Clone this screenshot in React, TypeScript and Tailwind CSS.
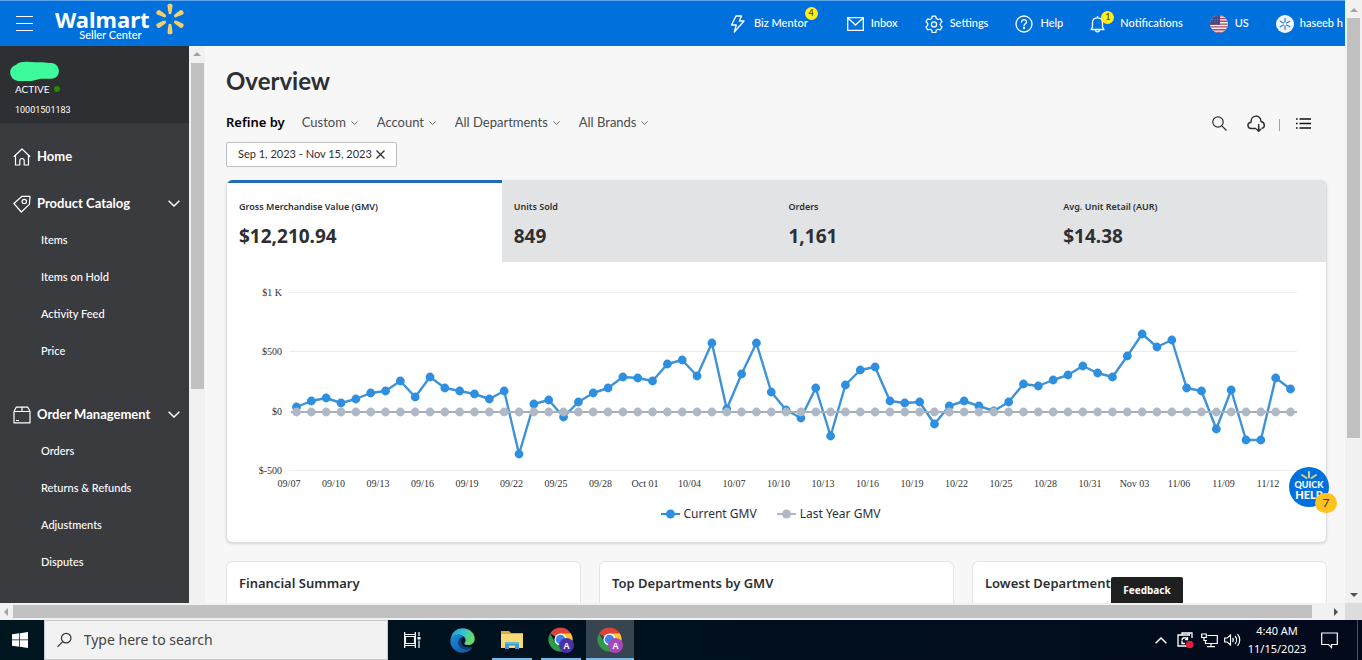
import React from "react";

type IconProps = { className?: string };

const SPARK_RAYS = [0, 60, 120, 180, 240, 300];

function Spark({ className }: IconProps) {
  return (
    <svg viewBox="-15 -15 30 30" className={className} fill="currentColor" aria-hidden="true">
      {SPARK_RAYS.map((angle) => (
        <path key={angle} transform={`rotate(${angle})`} d="M-1.3-5.2C-1.8-8-2.3-11-2.3-12.8C-2.3-14.8 2.3-14.8 2.3-12.8C2.3-11 1.8-8 1.3-5.2C1-4.3-1-4.3-1.3-5.2Z" />
      ))}
    </svg>
  );
}

function ThinSpark({ className }: IconProps) {
  return (
    <svg viewBox="-15 -15 30 30" className={className} stroke="currentColor" strokeWidth="2.600" strokeLinecap="round" aria-hidden="true">
      {SPARK_RAYS.map((angle) => (
        <path key={angle} transform={`rotate(${angle})`} d="M0-4V-12" />
      ))}
    </svg>
  );
}

function Bolt() {
  return (
    <svg viewBox="0 0 16 18" className="h-[18px] w-4" fill="none" stroke="currentColor" strokeWidth="1.3" strokeLinejoin="round" aria-hidden="true">
      <path d="M6 1h5.5L9.3 6H14L4.3 17l2-7H1.5z" />
    </svg>
  );
}

function Envelope() {
  return (
    <svg viewBox="0 0 17 14" className="h-3.5 w-[17px]" fill="none" stroke="currentColor" strokeWidth="1.3" aria-hidden="true">
      <path d="M.7.7h15.6v12.6H.7zM.9 1l7.6 7L16.100 1" />
    </svg>
  );
}

function Gear() {
  return (
    <svg viewBox="0 0 24 24" className="h-[18px] w-[18px]" fill="none" stroke="currentColor" strokeWidth="1.7" strokeLinejoin="round" aria-hidden="true">
      <path d="M9.700 1.500h4.600l.7 3.100 2.400 1.400 3-.95 2.300 4-2.300 2.150v2.600l2.300 2.150-2.300 4-3-.95-2.400 1.400-.7 3.100H9.700L9 20.400 6.600 19l-3 .95-2.300-4 2.300-2.150v-2.600L1.300 9.050l2.300-4 3 .95L9 4.600z" />
      <circle cx="12" cy="12.500" r="3.400" />
    </svg>
  );
}

function HelpIcon() {
  return (
    <svg viewBox="0 0 18 18" className="h-[18px] w-[18px]" fill="none" stroke="currentColor" strokeWidth="1.3" aria-hidden="true">
      <circle cx="9" cy="9" r="8" />
      <path d="M6.600 7.100C6.600 3.800 11.500 4 11.500 6.900C11.500 8.700 9 8.700 9 10.800" strokeLinecap="round" />
      <circle cx="9" cy="13" r=".5" fill="currentColor" />
    </svg>
  );
}

function Bell() {
  return (
    <svg viewBox="0 0 16 18" className="h-[18px] w-4" fill="none" stroke="currentColor" strokeWidth="1.300" strokeLinejoin="round" aria-hidden="true">
      <path d="M1 14.500h13L12.500 12V7.500C12.500 4.500 10.500 2.800 7.500 2.800S2.500 4.500 2.500 7.500V12zM7.500 2.800V1M5.500 14.800C5.500 17.600 9.500 17.600 9.500 14.800" />
    </svg>
  );
}

function Flag() {
  return (
    <svg viewBox="0 0 18 18" className="h-[18px] w-[18px]" aria-hidden="true">
      <clipPath id="flag-disc"><circle cx="9" cy="9" r="9" /></clipPath>
      <g clipPath="url(#flag-disc)">
        <path fill="#f3f1f4" d="M0 0h18v18H0z" />
        {[0, 2.800, 5.600, 8.400, 11.200, 14, 16.800].map((y) => (
          <path key={y} fill="#b5475c" d={`M0 ${y}h18v1.400H0z`} />
        ))}
        <path fill="#3f4a86" d="M0 0h10v9.800H0z" />
        {[1.800, 4.200, 6.600].map((y) => (
          <g key={y} fill="#a9aed0">
            <circle cx="2.500" cy={y} r=".45" />
            <circle cx="5" cy={y} r=".45" />
            <circle cx="7.500" cy={y} r=".45" />
          </g>
        ))}
      </g>
    </svg>
  );
}

function HouseIcon() {
  return (
    <svg viewBox="0 0 18 18" className="h-[18px] w-[18px]" fill="none" stroke="currentColor" strokeWidth="1.200" strokeLinejoin="round" aria-hidden="true">
      <path d="M.8 8.700L9 1l8.200 7.700M2.500 7.300V17h4.300v-4.200C6.800 9.700 11.200 9.700 11.200 12.800V17h4.300V7.300" />
    </svg>
  );
}

function TagIcon() {
  return (
    <svg viewBox="0 0 18 18" className="h-[18px] w-[18px]" fill="none" stroke="currentColor" strokeWidth="1.200" strokeLinejoin="round" aria-hidden="true">
      <path d="M.9 8.500L9 1.300l8 .1-.6 8L8.300 17z" />
      <circle cx="11.300" cy="6.500" r="2.200" />
    </svg>
  );
}

function BoxIcon() {
  return (
    <svg viewBox="0 0 18 18" className="h-[18px] w-[18px]" fill="none" stroke="currentColor" strokeWidth="1.200" strokeLinejoin="round" aria-hidden="true">
      <path d="M1 5.500L3.200 1.200h11.600L17 5.500V16.800H1zM1 5.500h16M9 1.200v4.300M3 14.500h3" />
    </svg>
  );
}

function Chevron({ className }: IconProps) {
  return (
    <svg viewBox="0 0 12 7" className={className} fill="none" stroke="currentColor" strokeWidth="1.500" aria-hidden="true">
      <path d="M.6.7L6 6 11.400.7" />
    </svg>
  );
}

function ChromeIcon({ badge }: { badge: string }) {
  return (
    <svg viewBox="0 0 26 26" className="h-[26px] w-[26px]" aria-hidden="true">
      <path d="M12.500 12.500L2.100 6.500A12 12 0 0 1 22.900 6.500L24 10H12.500z" fill="#dc4437" />
      <path d="M12.500 6.500H22.900A12 12 0 0 1 12.500 24.500L17.700 15.500z" fill="#fcc934" />
      <path d="M2.100 6.500A12 12 0 0 0 12.500 24.500L17.700 15.500 7.300 15.500z" fill="#2f9a4c" />
      <circle cx="12.500" cy="12.500" r="6" fill="#fff" />
      <circle cx="12.500" cy="12.500" r="4.700" fill="#3f83ee" />
      <circle cx="18.500" cy="18.500" r="7.500" fill={badge} />
      <text x="18.500" y="21.500" textAnchor="middle" fontSize="9" fontWeight="bold" fill="#fff" className="font-['Liberation_Sans',sans-serif]">A</text>
    </svg>
  );
}

const HEADER_ITEMS = [
  { label: "Inbox", icon: <Envelope /> },
  { label: "Settings", icon: <Gear /> },
  { label: "Help", icon: <HelpIcon /> },
];

function TopBar() {
  return (
    <header className="flex h-[46px] shrink-0 items-center border-t border-[#5ba3ea] bg-[#0071dc] pr-0.5 pl-4 text-[11px] font-medium text-white">
      <button type="button" aria-label="Menu" className="flex w-[17px] flex-col gap-1.5">
        <span className="h-px w-full bg-white" />
        <span className="h-px w-full bg-white" />
        <span className="h-px w-full bg-white" />
      </button>
      <a href="#home" className="ml-[22px] flex h-full gap-1">
        <span className="flex flex-col items-end pt-2">
          <span className="font-['Noto_Sans',sans-serif] text-[22px] leading-5 font-bold">Walmart</span>
          <span className="pr-2 text-[11px] leading-[11px]">Seller Center</span>
        </span>
        <Spark className="mt-0.5 h-8 w-8 text-[#f3cf6b]" />
      </a>
      <nav className="ml-auto flex items-center gap-[27px]">
        <a href="#mentor" className="relative mr-3 flex items-center gap-2">
          <Bolt />
          Biz Mentor
          <span className="absolute -top-2 -right-2.5 flex h-[13px] w-[13px] items-center justify-center rounded-full bg-[#ffee1f] text-[9px] text-[#4a4520]">4</span>
        </a>
        {HEADER_ITEMS.map((item) => (
          <a key={item.label} href={`#${item.label}`} className="flex items-center gap-[7px]">
            {item.icon}
            {item.label}
          </a>
        ))}
        <a href="#notifications" className="relative flex items-center gap-3.5">
          <Bell />
          <span className="absolute -top-1 left-[11px] flex h-[13px] w-[13px] items-center justify-center rounded-full bg-[#ffee1f] text-[9px] text-[#4a4520]">1</span>
          Notifications
        </a>
        <button type="button" className="flex items-center gap-[7px]">
          <Flag />
          US
        </button>
        <button type="button" className="flex items-center gap-1.5">
          <span className="flex h-[18px] w-[18px] items-center justify-center rounded-full bg-[#f2f8fd] text-[#2c7fc4]">
            <ThinSpark className="h-3.5 w-3.5" />
          </span>
          haseeb h
        </button>
      </nav>
    </header>
  );
}

const GROUPS = [
  { label: "Product Catalog", icon: <TagIcon />, items: ["Items", "Items on Hold", "Activity Feed", "Price"] },
  { label: "Order Management", icon: <BoxIcon />, items: ["Orders", "Returns & Refunds", "Adjustments", "Disputes"] },
];

function Sidebar() {
  return (
    <aside className="flex w-[205px] shrink-0 overflow-hidden">
      <div className="min-w-0 flex-1 bg-[#3a3b3f] text-white">
        <div className="flex h-[77px] flex-col bg-[#2e2f32] pt-[15px] pl-2.5 text-[10px] leading-4">
          <svg viewBox="0 0 50 20" className="h-5 w-[50px]" aria-hidden="true">
            <path d="M10 1.500C16 0 20 1.500 26 1.200S36 1.800 42 2C51 3.500 51 16 43 17.500C36 18.500 31 16.500 26 19C20 21 14 20 8 20C-2 18-2 6 6 4C7 3 8 2 10 1.500Z" fill="#3dfb9c" />
          </svg>
          <p className="flex items-center gap-1 pl-[5px]">ACTIVE <span className="h-1.5 w-1.5 rounded-full bg-[#2a8703]" /></p>
          <p className="mt-[5px] pl-[5px] font-['Roboto',sans-serif] text-[9px]">10001501183</p>
        </div>
        <nav className="flex flex-col pt-[15px]">
          <a href="#home" className="mb-2.5 flex h-[37px] items-center gap-1.5 pl-[13px] text-[13px] font-bold">
            <HouseIcon />
            Home
          </a>
          {GROUPS.map((group) => (
            <section key={group.label} className="mb-[26px]">
              <button type="button" aria-expanded="true" className="flex h-[37px] w-full items-center gap-1.5 pr-[9px] pl-[13px] text-[13px] font-bold">
                {group.icon}
                {group.label}
                <Chevron className="ml-auto h-[7px] w-3" />
              </button>
              {group.items.map((item) => (
                <a key={item} href={`#${item}`} className="flex h-[37px] items-center pl-[41px] text-[11px] font-medium">{item}</a>
              ))}
            </section>
          ))}
        </nav>
      </div>
      <div className="flex w-4 flex-col items-center bg-[#f1f1f1] pt-1.5">
        <span className="h-0 w-0 border-x-4 border-b-4 border-x-transparent border-b-[#a3a3a3]" />
        <span className="mt-[7px] h-[326px] w-[13px] bg-[#c1c1c1]" />
      </div>
    </aside>
  );
}

const FILTERS = ["Custom", "Account", "All Departments", "All Brands"];

function Filters() {
  return (
    <div className="mt-3 flex h-[26px] items-center text-[13px]">
      <span className="mr-[17px] font-['Noto_Sans',sans-serif] font-semibold text-black">Refine by</span>
      <div className="flex items-center gap-[19px] text-[#4a4b4e]">
        {FILTERS.map((filter) => (
          <label key={filter} className="flex items-center gap-1">
            <select aria-label={filter} className="appearance-none bg-transparent">
              <option>{filter}</option>
            </select>
            <Chevron className="h-1 w-[7px]" />
          </label>
        ))}
      </div>
      <div className="mr-4 ml-auto flex items-center text-[#2e2f32]">
        <button type="button" aria-label="Search">
          <svg viewBox="0 0 15 15" className="h-[15px] w-[15px]" fill="none" stroke="currentColor" strokeWidth="1.200"><circle cx="6" cy="6" r="5.200" /><path d="M9.800 9.800l4.700 4.700" /></svg>
        </button>
        <button type="button" aria-label="Download" className="ml-5">
          <svg viewBox="0 0 18 17" className="h-[17px] w-[18px]" fill="none" stroke="currentColor" strokeWidth="1.500" strokeLinecap="round" strokeLinejoin="round"><path d="M8.500 13.500H4.200C0 13.200-.2 7.700 4 7.200C3.800-.7 14-.9 14 6.600C18.300 7.500 18 12.500 15.300 13.200M11.700 9.500v6.500M9.700 14.200l2 2 2-2" /></svg>
        </button>
        <span className="mt-1 ml-3.5 h-3 w-px bg-[#9fa1a4]" />
        <button type="button" aria-label="List view" className="ml-4">
          <svg viewBox="0 0 15 11" className="h-[11px] w-[15px]" stroke="#111" strokeWidth="1.700"><path d="M0 1h1.600M3.500 1H15M0 5.500h1.600M3.500 5.500H15M0 10h1.600M3.500 10H15" /></svg>
        </button>
      </div>
    </div>
  );
}

const METRICS = [
  { label: "Gross Merchandise Value (GMV)", value: "$12,210.94" },
  { label: "Units Sold", value: "849" },
  { label: "Orders", value: "1,161" },
  { label: "Avg. Unit Retail (AUR)", value: "$14.38" },
];

// Vertical positions of the daily GMV points, in chart units.
const CURRENT = [
  145, 139, 136, 141, 137, 131, 129, 119, 135, 115, 126, 129, 132, 137, 129, 192, 142, 138, 155, 140, 131, 126, 115,
  116, 119, 102, 98, 114, 81, 147, 112, 81, 130, 148, 156, 126, 174, 123, 108, 105, 139, 141, 140, 162, 144, 139, 144,
  149, 140, 122, 124, 118, 113, 104, 111, 115, 94, 72, 85, 78, 126, 129, 167, 128, 178, 178, 116, 127,
];
const ZERO_Y = 150;
const pointX = (i: number) => 69.500 + i * 14.836;

const DATES = [
  "09/07", "09/10", "09/13", "09/16", "09/19", "09/22", "09/25", "09/28", "Oct 01", "10/04", "10/07", "10/10",
  "10/13", "10/16", "10/19", "10/22", "10/25", "10/28", "10/31", "Nov 03", "11/06", "11/09", "11/12",
];
const AXIS = [
  { label: "$1 K", y: 30 },
  { label: "$500", y: 89 },
  { label: "$0", y: 149 },
  { label: "$-500", y: 208 },
];

function GmvChart() {
  return (
    <svg viewBox="0 0 1099 233" className="w-full font-['Liberation_Serif',serif]" role="img" aria-label="Gross merchandise value by day">
      {AXIS.map((tick) => (
        <g key={tick.label}>
          <path d={`M62 ${tick.y + 0.5}H1070`} stroke="#ececee" />
          <text x="55" y={tick.y + 4} textAnchor="end" fontSize="10" fill="#333">{tick.label}</text>
        </g>
      ))}
      {DATES.map((date, i) => (
        <text key={date} x={62 + i * 44.500} y="225" textAnchor="middle" fontSize="10" fill="#333">{date}</text>
      ))}
      <polyline points={CURRENT.map((y, i) => `${pointX(i)},${y}`).join(" ")} fill="none" stroke="#3d93d6" strokeWidth="2.400" strokeLinejoin="round" />
      {CURRENT.map((y, i) => <circle key={i} cx={pointX(i)} cy={y} r="4.400" fill="#2e8fe0" />)}
      <path d={`M64 ${ZERO_Y}H1070`} stroke="#a9adb5" strokeWidth="2.200" />
      {CURRENT.map((_, i) => <circle key={i} cx={pointX(i)} cy={ZERO_Y} r="4.400" fill="#aeb8c6" />)}
    </svg>
  );
}

function LegendEntry({ label, tone }: { label: string; tone: string }) {
  return (
    <button type="button" className="flex items-center gap-1 text-[#2e2f32]">
      <svg viewBox="0 0 19 10" className={`h-2.5 w-[19px] ${tone}`} fill="currentColor" aria-hidden="true">
        <path d="M0 4h19v2H0z" />
        <circle cx="9.500" cy="5" r="4.500" />
      </svg>
      {label}
    </button>
  );
}

function MetricsCard() {
  return (
    <section className="mt-[13px] overflow-hidden rounded-md border border-t-0 border-[#dcdddf] bg-white font-['Noto_Sans',sans-serif] shadow-sm">
      <div className="grid h-[82px] grid-cols-4" role="tablist">
        {METRICS.map((metric, i) => (
          <button
            key={metric.label}
            type="button"
            role="tab"
            aria-selected={i === 0}
            className={`flex flex-col border-t-3 pt-4 pl-3 text-left text-[#2e2f32] ${i === 0 ? "border-[#1f6db3] bg-white" : "border-[#e2e3e5] bg-[#e2e3e5]"}`}
          >
            <span className="text-[9px] leading-4 font-semibold">{metric.label}</span>
            <span className="mt-2 text-[19px] leading-[26px] font-bold">{metric.value}</span>
          </button>
        ))}
      </div>
      <GmvChart />
      <div className="flex justify-center gap-5 pt-[9px] pr-3 pb-[18px] text-xs leading-5">
        <LegendEntry label="Current GMV" tone="text-[#2e8fe0]" />
        <LegendEntry label="Last Year GMV" tone="text-[#aeb8c6]" />
      </div>
    </section>
  );
}

function Overview() {
  return (
    <main className="min-w-0 flex-1 overflow-hidden bg-[#f7f7f8] pt-[18px] pr-[18px] pl-[21px]">
      <h1 className="text-2xl leading-[34px] font-bold text-[#2e2f32]">Overview</h1>
      <Filters />
      <button type="button" className="mt-1.5 flex h-[25px] w-[171px] items-center gap-1 rounded-xs border border-[#bcbdc0] bg-white pl-[11px] text-[11px] text-[#2e2f32]">
        Sep 1, 2023 - Nov 15, 2023
        <svg viewBox="0 0 9 9" className="h-[9px] w-[9px]" stroke="currentColor" strokeWidth="1.300" aria-hidden="true"><path d="M.5.5l8 8M8.500.5l-8 8" /></svg>
      </button>
      <MetricsCard />
      <div className="mt-[18px] grid grid-cols-3 gap-[18px]">
        {["Financial Summary", "Top Departments by GMV", "Lowest Departments by GMV"].map((title) => (
          <section key={title} className="h-40 overflow-hidden rounded-md border border-[#e3e4e5] bg-white pt-[11px] pl-3">
            <h2 className="font-['Noto_Sans',sans-serif] text-[13px] leading-5 font-semibold whitespace-nowrap text-[#2e2f32]">{title}</h2>
          </section>
        ))}
      </div>
    </main>
  );
}

function FloatingActions() {
  return (
    <>
      <button type="button" className="absolute right-[162px] bottom-0 h-[26px] w-[72px] rounded-t-xs bg-[#1f1f1f] font-['Noto_Sans',sans-serif] text-[10px] font-bold text-white">Feedback</button>
      <button type="button" className="absolute right-4 bottom-24 flex h-10 w-10 flex-col items-center rounded-full bg-[#0071dc] pt-1 font-['Lato',sans-serif] text-[9px] leading-[10px] font-black text-white">
        <svg viewBox="0 0 18 9" className="h-[9px] w-[18px]" stroke="#d9cf7c" strokeWidth="2" strokeLinecap="round" aria-hidden="true"><path d="M9 1v5.500M2 4l4.500 3M16 4l-4.500 3" /></svg>
        <span>QUICK</span>
        <span className="text-[11px]">HELP</span>
        <span className="absolute -right-2 -bottom-1.5 flex h-5 w-[22px] items-center justify-center rounded-full bg-[#ffc220] text-xs font-normal text-[#3d3418]">7</span>
      </button>
    </>
  );
}

function VerticalScrollbar() {
  return (
    <div className="flex w-[17px] shrink-0 flex-col items-center bg-[#f1f1f1] pt-2 pb-1.5">
      <span className="h-0 w-0 border-x-4 border-b-4 border-x-transparent border-b-[#a3a3a3]" />
      <span className="mt-1.5 h-[420px] w-[13px] bg-[#c1c1c1]" />
      <span className="mt-auto h-0 w-0 border-x-4 border-t-4 border-x-transparent border-t-[#505050]" />
    </div>
  );
}

function HorizontalScrollbar() {
  return (
    <div className="flex h-[17px] shrink-0 bg-[#f1f1f1]">
      <div className="flex flex-1 items-center pl-1">
        <span className="h-0 w-0 border-y-4 border-r-4 border-y-transparent border-r-[#a3a3a3]" />
        <span className="mr-[22px] ml-[5px] h-[13px] flex-1 bg-[#c1c1c1]" />
        <span className="mr-[7px] h-0 w-0 border-y-4 border-l-4 border-y-transparent border-l-[#505050]" />
      </div>
      <span className="w-[17px] bg-[#dcdcdc]" />
    </div>
  );
}

function Taskbar() {
  return (
    <footer className="flex h-10 shrink-0 items-stretch bg-linear-to-r from-[#00161f] to-[#020a1c] font-['Noto_Sans',sans-serif] text-white">
      <button type="button" aria-label="Start" className="flex w-11 items-center justify-center pr-1">
        <svg viewBox="0 0 16 16" className="h-4 w-4" fill="#fff"><path d="M0 2.300L7.300 1.300V7.600H0zM8 1.200L16 0V7.600H8zM0 8.300H7.300V14.700L0 13.700zM8 8.300H16V16L8 14.800z" /></svg>
      </button>
      <label className="flex w-[344px] items-center gap-3 border border-[#c9c9c9] bg-[#f2f2f2] pl-3 text-[#333]">
        <svg viewBox="0 0 16 16" className="h-4 w-4" fill="none" stroke="currentColor" strokeWidth="1.300" aria-hidden="true"><circle cx="10" cy="6" r="5.200" /><path d="M6.300 9.700L.5 15.500" /></svg>
        <input type="text" aria-label="Search" placeholder="Type here to search" className="w-full bg-transparent text-sm outline-none placeholder:text-[#444]" />
      </label>
      <button type="button" aria-label="Task view" className="flex w-12 items-center justify-center">
        <svg viewBox="0 0 17 16" className="h-4 w-[17px]" fill="none" stroke="#fff" strokeWidth="1.200"><path d="M.7 0v2.500h10.600V0M.7 16v-2.500h10.600V16M1.500 4.500h9v7h-9zM.7 2.500v11M11.300 2.500v11M15 0v4M15 8.500V16" /><path d="M13.500 5h3v2.500h-3z" fill="#fff" stroke="none" /></svg>
      </button>
      <button type="button" aria-label="Edge" className="ml-px flex w-[50px] items-center justify-center">
        <svg viewBox="0 0 25 25" className="h-[25px] w-[25px]">
          <defs>
            <linearGradient id="edge-top" x1="0" y1="0" x2="1" y2="0.300"><stop offset="0" stopColor="#2397d8" /><stop offset=".55" stopColor="#35c1d0" /><stop offset="1" stopColor="#6adb62" /></linearGradient>
            <linearGradient id="edge-low" x1="0" y1="0" x2="1" y2="1"><stop offset="0" stopColor="#1b8ed8" /><stop offset="1" stopColor="#0f4fa0" /></linearGradient>
          </defs>
          <path d="M.5 12.500C1 5 6 .3 12.500.3C20 .3 25 6 24.700 11C24.500 15 21.500 17 18 17C15.500 17 14 16.200 14.300 15.200C15 14.500 15.700 13.500 15.600 12C15.400 9 12 6.500 8 6.700C4 7 1.500 9 .5 12.500Z" fill="url(#edge-top)" />
          <path d="M.4 13C1 8.500 4.500 6.300 8.500 6.700C11 7 13 8 13.500 9C9 9.500 8 13 9 16.500C10.500 21 15.500 23 22.500 19.500C20 23 16.500 24.800 12.500 24.700C5.500 24.500 0 19 .4 13Z" fill="url(#edge-low)" />
          <path d="M11 10C7.500 11.500 7.500 16 10 19C13 22.300 18 22 22.800 18.800C17 20 11.500 18.500 11.200 14C11.100 12.300 11.500 11 12.500 10Z" fill="#123f7c" />
        </svg>
      </button>
      <button type="button" aria-label="File Explorer" className="ml-[5px] flex w-10 items-center justify-center border-b-2 border-[#76b9ed] pt-0.5">
        <svg viewBox="0 0 22 20" className="h-5 w-[22px]"><path d="M0 1h8l2 2h12v15H0z" fill="#e2ab35" /><path d="M0 4h22v14H0z" fill="#f9d978" /><path d="M4 12h14v7h-4v-3.500H8V19H4z" fill="#3f9bc9" /><path d="M4 12h14v2H4z" fill="#66b6da" /></svg>
      </button>
      <button type="button" aria-label="Chrome" className="ml-[9px] flex w-10 items-center justify-center border-b-2 border-[#76b9ed] pt-0.5"><ChromeIcon badge="#4a2fa6" /></button>
      <button type="button" aria-label="Chrome, active" className="ml-[5px] flex w-12 items-center justify-center border-b-2 border-[#76b9ed] bg-[#36454f] pt-0.5"><ChromeIcon badge="#a847bb" /></button>
      <div className="ml-auto flex items-center">
        <Chevron className="h-[7px] w-3 rotate-180" />
        <svg viewBox="0 0 17 17" className="ml-2.5 h-[17px] w-[17px]" fill="none" stroke="#fff" strokeWidth="1.300" aria-hidden="true"><path d="M15 6V1H5v2H1v11h10M12 1v2M5 3h8M5 8.500c0-3.500 4.500-3.500 5.500-1M10.500 5v2.700H8M5 9v2.500h3" /><circle cx="12.700" cy="12.500" r="3.800" fill="#e01f3d" stroke="none" /></svg>
        <svg viewBox="0 0 17 15" className="ml-[7px] h-[15px] w-[17px]" fill="none" stroke="#fff" strokeWidth="1.200" aria-hidden="true"><path d="M6.500 2.500h9.800v8H4.500V7.500M.7 1h4.600v3.500H.7zM3 4.500v3h3M10 10.500v3M6 13.700h8" /></svg>
        <svg viewBox="0 0 17 14" className="ml-1.5 h-3.5 w-[17px]" fill="none" stroke="#fff" strokeWidth="1.200" aria-hidden="true"><path d="M.7 5h2.500L6.500 2v10L3.200 9H.7zM8.500 5c1 1.200 1 2.800 0 4M11 3c2 2.300 2 5.700 0 8M13.500 1.200c3 3.300 3 8.300 0 11.600" /></svg>
        <time className="ml-1 w-16 text-center text-[11px] leading-[18px] whitespace-nowrap">4:40 AM<br />11/15/2023</time>
        <button type="button" aria-label="Notifications" className="ml-3">
          <svg viewBox="0 0 17 17" className="h-[17px] w-[17px]" fill="none" stroke="#fff" strokeWidth="1.200"><path d="M.7 1h15.600v11.500H10.500V15.500L7.500 12.500H.7z" /></svg>
        </button>
        <span className="mr-1 ml-[19px] h-10 w-px bg-[#4a525f]" />
      </div>
    </footer>
  );
}

export default function App() {
  return (
    <div className="flex h-screen flex-col overflow-hidden font-['Lato',sans-serif]">
      <div className="flex min-h-0 flex-1">
        <div className="flex min-w-0 flex-1 flex-col">
          <TopBar />
          <div className="relative flex min-h-0 flex-1">
            <Sidebar />
            <Overview />
            <FloatingActions />
          </div>
        </div>
        <VerticalScrollbar />
      </div>
      <HorizontalScrollbar />
      <Taskbar />
    </div>
  );
}
